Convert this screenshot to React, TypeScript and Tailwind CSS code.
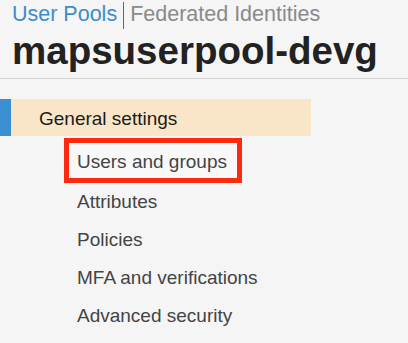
import React from 'react';

const subItems = ['Attributes', 'Policies', 'MFA and verifications', 'Advanced security'];

const App = () => {
  return (
    <div className="w-[408px] h-[343px] overflow-hidden bg-[#f5f5f5] font-['Liberation_Sans',Arial,sans-serif]">
      <div className="border-b border-[#d3d3d3] pl-3 pb-[5px]">
        <div className="flex items-center h-7 text-[21.5px] leading-7">
          <span className="text-[#3d8ccc]">User Pools</span>
          <span className="ml-[6px] mr-[6px] mt-[2px] h-[27px] w-px bg-[#666]" />
          <span className="text-[#8a8a8a]">Federated Identities</span>
        </div>
        <h1 className="mt-px text-[38.5px] leading-[44px] font-bold text-[#222]">mapsuserpool-devg</h1>
      </div>

      <nav className="mt-5 w-[311px]">
        <div className="flex h-[37px]">
          <div className="w-[11px] bg-[#3a8fd3]" />
          <div className="flex-1 bg-[#f9e5c8] pl-7 pt-[2px] text-[19px] leading-[35px] text-[#1b1b1b]">
            General settings
          </div>
        </div>

        <ul className="pl-16 text-[19px] text-[#444]">
          <li className="mt-[2px]">
            <span className="inline-block border-[5px] border-[#fb2a10] bg-[#f8f8f8] pl-2 pr-[10px] pt-[2px] leading-[33px]">
              Users and groups
            </span>
          </li>
          {subItems.map((item) => (
            <li key={item} className="pl-[13px] leading-[38px]">
              {item}
            </li>
          ))}
        </ul>
      </nav>
    </div>
  );
};

export default App;
